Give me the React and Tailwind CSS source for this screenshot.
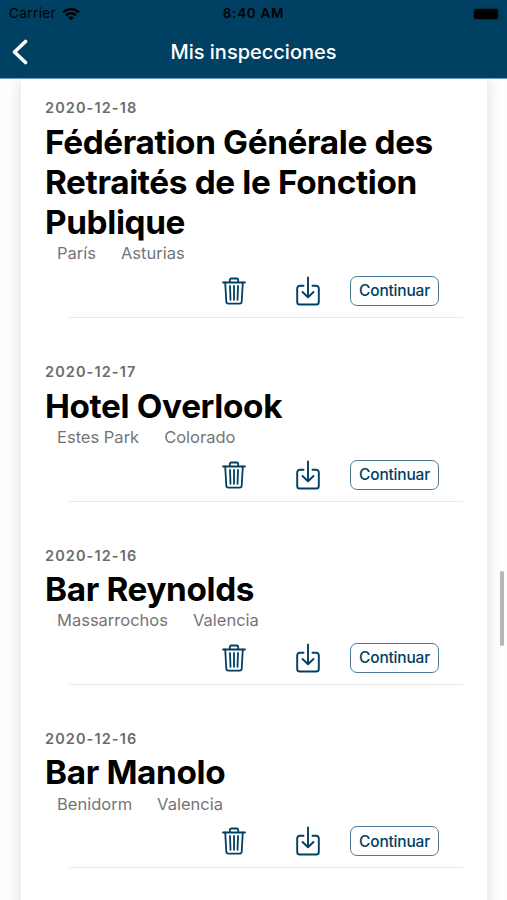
import React from "react";

const inspections = [
  {
    id: 1,
    date: "2020-12-18",
    name: "Fédération Générale des Retraités de le Fonction Publique",
    city: "París",
    province: "Asturias",
  },
  {
    id: 2,
    date: "2020-12-17",
    name: "Hotel Overlook",
    city: "Estes Park",
    province: "Colorado",
  },
  {
    id: 3,
    date: "2020-12-16",
    name: "Bar Reynolds",
    city: "Massarrochos",
    province: "Valencia",
  },
  {
    id: 4,
    date: "2020-12-16",
    name: "Bar Manolo",
    city: "Benidorm",
    province: "Valencia",
  },
];

function WifiIcon() {
  return (
    <svg width="18" height="14" viewBox="0 0 18 14" fill="none" stroke="currentColor" strokeWidth="2.3">
      <path d="M1 5.300a11.500 11.500 0 0 1 16 0" />
      <path d="M3.900 8.300a7.400 7.400 0 0 1 10.200 0" />
      <path d="M9 13.500L6.200 10.500a4 4 0 0 1 5.600 0z" fill="currentColor" stroke="none" />
    </svg>
  );
}

function TrashIcon() {
  return (
    <svg
      width="24"
      height="28"
      viewBox="0 0 24 28"
      fill="none"
      stroke="currentColor"
      strokeWidth="1.8"
      strokeLinecap="round"
      strokeLinejoin="round"
    >
      <path d="M1 5.500h22" />
      <path d="M7.800 5V3a1.500 1.500 0 0 1 1.500-1.500h5.400a1.500 1.500 0 0 1 1.500 1.500V5" />
      <path d="M3.200 5.500l1.100 19.300a2 2 0 0 0 2 1.900h11.400a2 2 0 0 0 2-1.900L20.800 5.500" />
      <path d="M8 9l.5 13.800M12 9v13.800M16 9l-.5 13.800" />
    </svg>
  );
}

function DownloadIcon() {
  return (
    <svg
      width="24"
      height="30"
      viewBox="0 0 24 30"
      fill="none"
      stroke="currentColor"
      strokeWidth="1.9"
      strokeLinecap="round"
      strokeLinejoin="round"
    >
      <path d="M7.500 9.700H3.800a2.600 2.600 0 0 0-2.600 2.600v13.600a2.600 2.600 0 0 0 2.600 2.600h16.400a2.600 2.600 0 0 0 2.600-2.600V12.300a2.600 2.600 0 0 0-2.600-2.600h-3.700" />
      <path d="M12 1.500v19.500M6.500 16l5.500 5.300 5.500-5.300" />
    </svg>
  );
}

function Header() {
  return (
    <header className="h-[79px] shrink-0 bg-[#004062] border-b border-[#6d9fbd]">
      <div className="grid h-[27px] grid-cols-3 items-center pl-[9px] pr-[9px] text-[13.5px] text-black">
        <div className="flex items-center gap-[6px]">
          <span className="tracking-[0.400px]">Carrier</span>
          <WifiIcon />
        </div>
        <span className="text-center font-semibold tracking-[0.700px]">8:40 AM</span>
        <div className="flex justify-end">
          <div className="h-[10px] w-[24px] rounded-[2px] bg-black shadow-[0_0_2px_1px_rgba(0,0,0,0.25)]" />
        </div>
      </div>
      <div className="grid h-[50px] grid-cols-[40px_1fr_40px] items-center text-white">
        <svg
          className="ml-[11px]"
          width="17"
          height="26"
          viewBox="0 0 17 26"
          fill="none"
          stroke="currentColor"
          strokeWidth="3.6"
          strokeLinecap="round"
          strokeLinejoin="round"
        >
          <path d="M14.500 2.500L3.500 13l11 10.500" />
        </svg>
        <h1 className="text-center text-[20px] font-medium">
          Mis inspecciones
        </h1>
      </div>
    </header>
  );
}

function InspectionItem({ inspection }) {
  return (
    <li className="h-[183.300px] first:h-[239.300px] shrink-0 pt-[45px] first:pt-[20px] pl-[24px] pr-[24px]">
      <p className="h-[18px] text-[14.500px] leading-[18px] font-semibold tracking-[1.100px] text-[#6b6b6b]">
        {inspection.date}
      </p>
      <h2 className="mt-[4.600px] text-[33.300px] leading-[40.300px] font-bold tracking-[-0.350px] text-black">
        {inspection.name}
      </h2>
      <div className="mt-[1px] flex h-[20px] gap-[25px] pl-[12px] text-[16.500px] leading-[20px] text-[#757575]">
        <span>{inspection.city}</span>
        <span>{inspection.province}</span>
      </div>
      <div className="mt-[12.400px] ml-[24px] flex h-[42px] items-start justify-end border-b border-[#e9e9e9] pr-[24px] text-[#004062]">
        <button className="mr-[50px] flex h-[30px] items-center">
          <TrashIcon />
        </button>
        <button className="mr-[30px] flex h-[30px] items-center">
          <DownloadIcon />
        </button>
        <button className="h-[30px] w-[89px] rounded-[7px] border-[1.500px] border-[#4d7a96] text-[15.500px] font-medium tracking-[-0.200px]">
          Continuar
        </button>
      </div>
    </li>
  );
}

export default function App() {
  return (
    <div className="relative flex h-[900px] w-[507px] flex-col overflow-hidden bg-[#fefefe] font-['Inter',sans-serif]">
      <Header />
      <main className="flex-1 overflow-hidden">
        <ul className="ml-[21px] mr-[20px] flex h-[900px] flex-col bg-white shadow-[0_0_14px_rgba(0,0,0,0.14)]">
          {inspections.map((inspection) => (
            <InspectionItem key={inspection.id} inspection={inspection} />
          ))}
        </ul>
      </main>
      {/* scroll indicator */}
      <div className="absolute top-[571px] right-[3px] h-[75px] w-[4px] rounded-full bg-[#b5b5b5]" />
    </div>
  );
}
